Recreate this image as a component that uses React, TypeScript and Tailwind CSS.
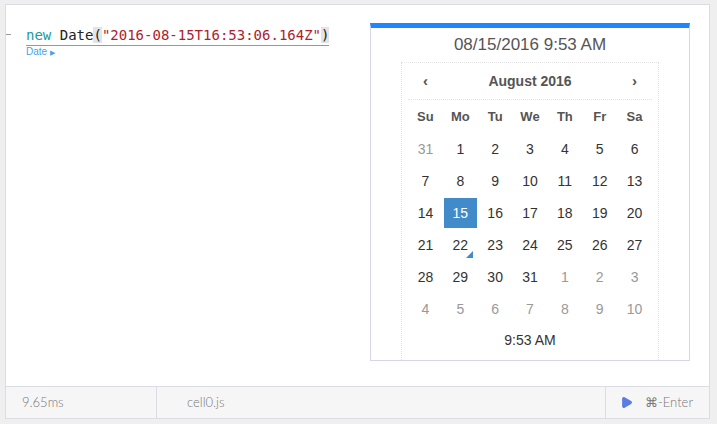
import { Play } from 'lucide-react';

const days = ['Su', 'Mo', 'Tu', 'We', 'Th', 'Fr', 'Sa'];

type Day = { n: number; muted?: boolean; active?: boolean; today?: boolean };

function buildWeeks(): Day[][] {
  const cells: Day[] = [{ n: 31, muted: true }];
  for (let i = 1; i <= 31; i++) cells.push({ n: i, active: i === 15, today: i === 22 });
  for (let i = 1; i <= 10; i++) cells.push({ n: i, muted: true });
  const weeks: Day[][] = [];
  for (let w = 0; w < 6; w++) weeks.push(cells.slice(w * 7, w * 7 + 7));
  return weeks;
}

function Calendar() {
  const weeks = buildWeeks();
  return (
    <div className="w-[320px] h-[338px] flex flex-col bg-white border-t-[5px] border-t-[#1f86ff] border-x border-b border-x-[#d6d6e6] border-b-[#d6d6e6] font-['Liberation_Sans',Arial,sans-serif]">
      <div className="h-[34px] flex items-center justify-center text-[17px] text-[#555]">
        08/15/2016 9:53 AM
      </div>
      <div className="mx-[30px] flex-1 border-x border-t border-dotted border-[#e2e2e2] px-[6px]">
        <div className="h-[37px] flex items-center border-b border-dotted border-[#e2e2e2] text-[#555]">
          <div className="w-[35px] text-center text-[15px] font-bold">‹</div>
          <div className="flex-1 text-center text-[14px] font-bold">August 2016</div>
          <div className="w-[35px] text-center text-[15px] font-bold">›</div>
        </div>
        <div className="grid grid-cols-7 h-[33px] items-center text-[13px] font-bold text-[#555]">
          {days.map((d) => (
            <div key={d} className="text-center">{d}</div>
          ))}
        </div>
        {weeks.map((week, wi) => (
          <div key={wi} className="grid grid-cols-7 h-[32px]">
            {week.map((d, di) => (
              <div
                key={di}
                className={`relative mx-[1px] my-[1px] flex items-center justify-center text-[14px] ${
                  d.active ? 'bg-[#428bca] text-white' : d.muted ? 'text-[#999]' : 'text-[#333]'
                }`}
              >
                {d.n}
                {d.today && (
                  <span className="absolute right-[4px] bottom-[2px] w-0 h-0 border-l-[7px] border-l-transparent border-b-[7px] border-b-[#428bca]" />
                )}
              </div>
            ))}
          </div>
        ))}
        <div className="h-[30px] flex items-center justify-center text-[14px] text-[#333]">9:53 AM</div>
      </div>
    </div>
  );
}

export default function App() {
  return (
    <div className="w-[717px] h-[424px] bg-[#efefef] pl-[5px] pt-[4px] pr-[7px] pb-[5px]">
      <div className="w-full h-full flex flex-col bg-white border border-[#dcdce4]">
        <div className="flex-1 flex">
          <div className="relative flex-1 pt-[17px] pl-[20px]">
            <div className="absolute left-0 top-[29px] w-[5px] h-px bg-[#999]" />
            <div className="inline-flex flex-col">
              <div className="font-['DejaVu_Sans_Mono',monospace] text-[14px] leading-[20px] border-b border-[#5aa6f0] text-[#222] whitespace-pre">
                <span className="text-[#1e9aa0]">new</span> Date<span className="bg-[#e4e4e4]">(</span>
                <span className="text-[#b0202a]">"2016-08-15T16:53:06.164Z"</span>
                <span className="bg-[#e4e4e4]">)</span>
              </div>
              <div className="text-[10px] leading-[11px] text-[#4aa0ee] font-['Liberation_Sans',Arial,sans-serif]">
                Date <span className="text-[7px]">▶</span>
              </div>
            </div>
          </div>
          <div className="mt-[18px] mr-[19px]">
            <Calendar />
          </div>
        </div>
        <div className="h-[32px] flex border-t border-[#dcdce4] bg-[#f6f6f6] font-['Lato',sans-serif] font-light text-[13px] text-[#777]">
          <div className="w-[151px] border-r border-[#dcdce4] flex items-center pl-[16px]">9.65ms</div>
          <div className="flex-1 flex items-center pl-[30px]">cell0.js</div>
          <div className="w-[104px] border-l border-[#dcdce4] flex items-center pl-[14px] gap-[12px]">
            <Play className="w-[13px] h-[13px] fill-[#5b7ce0] text-[#5b7ce0]" />
            <span>⌘-Enter</span>
          </div>
        </div>
      </div>
    </div>
  );
}
